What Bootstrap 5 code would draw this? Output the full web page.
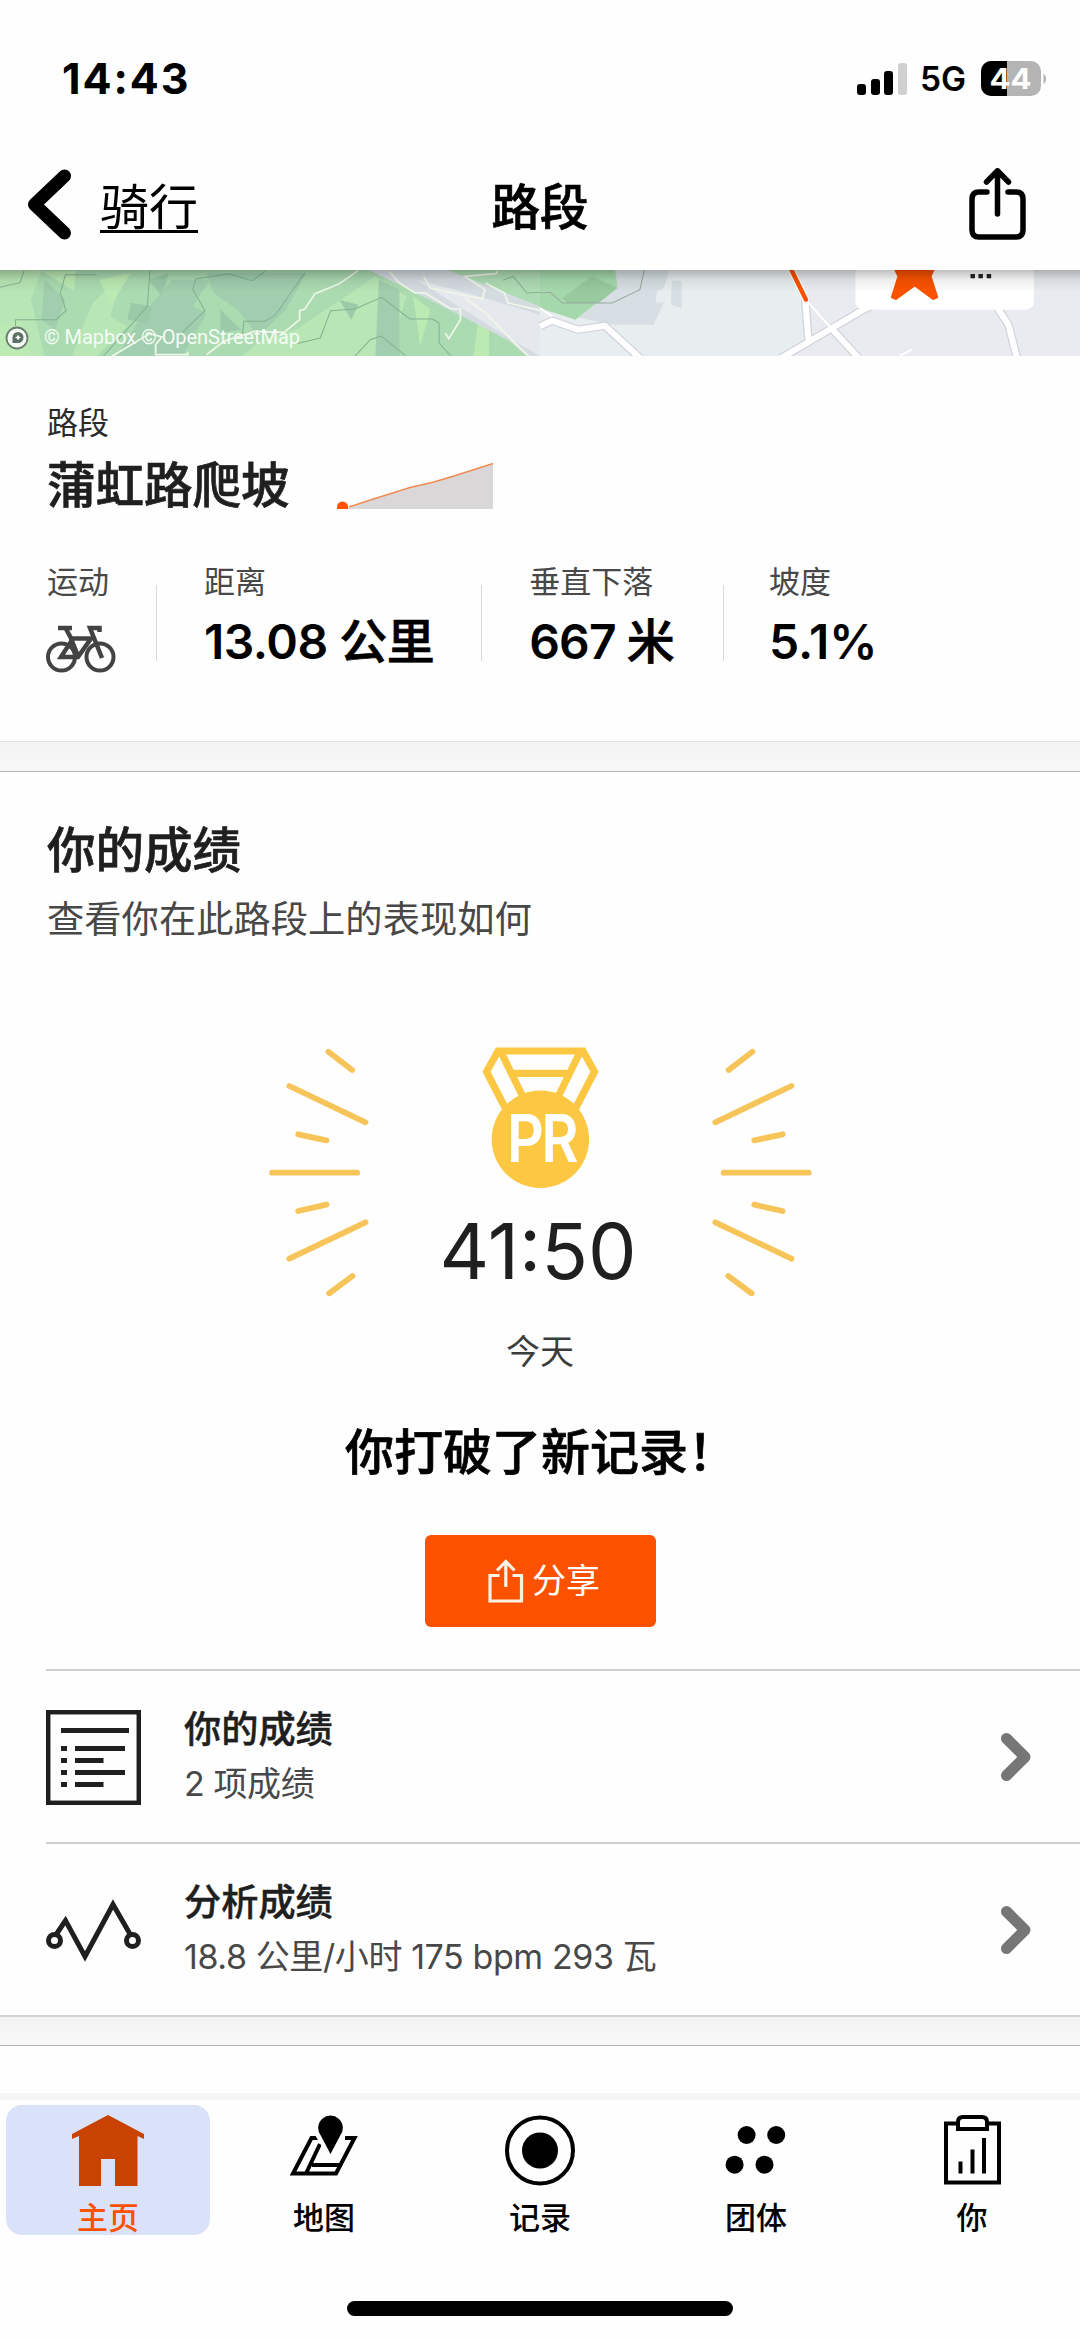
<!DOCTYPE html>
<html lang="zh-CN">
<head>
<meta charset="utf-8">
<meta name="viewport" content="width=device-width, initial-scale=1">
<title>路段</title>
<link rel="stylesheet" href="https://cdn.jsdelivr.net/npm/bootstrap@5.3.0/dist/css/bootstrap.min.css">
<style>
  body { font-family: Inter, "Noto Sans CJK SC", sans-serif; color: #000; background: #fefefe; width: 1080px; height: 2339px; overflow: hidden; }
  svg { display: block; flex: none; }
  .semi { font-weight: 500; -webkit-text-stroke: .7px currentColor; }
  .statusbar { height: 157px; padding: 0 33px 0 62px; }
  .clock { font-size: 43px; font-weight: 700; line-height: 157px; letter-spacing: 1.9px; }
  .signal { width: 50px; height: 32px; margin-right: 13px; }
  .carrier { font-size: 33.5px; font-weight: 600; line-height: 40px; width: 61px; }
  .topnav { height: 113px; padding: 0 27px 12px 27px; }
  .topnav > * { flex: 1 1 0; }
  .topnav svg { margin-bottom: 6px; }
  .share-link svg { margin-right: 27px; }
  .back-text { font-size: 49px; line-height: 60px; margin-left: 27px; text-decoration: underline; text-decoration-thickness: 3px; text-underline-offset: 5px; color: #000; }
  .nav-heading { font-size: 48.5px; line-height: 60px; }
  .seg-info { height: 385px; padding: 30px 46px 0 47px; }
  .seg-label { font-size: 31px; line-height: 36px; color: #2a2a2a; margin-top: 19px; }
  .name-line { margin-top: 15px; gap: 47px; }
  .seg-name { font-size: 48.5px; line-height: 60px; color: #1f1f1f; }
  .stats { margin-top: 47px; }
  .stat { padding-right: 47px; }
  .stat:first-child { width: 109px; padding-right: 0; }
  .stat.drop { padding-right: 49px; }
  .stat.drop .stat-value { letter-spacing: -.9px; }
  .bike { margin-top: 23px; margin-left: -1px; }
  .rule-v + .stat { padding-left: 47px; }
  .rule-v + .stat.grade { padding-left: 45px; }
  .stat.grade .stat-value { letter-spacing: 0; }
  .stat-label { font-size: 31px; line-height: 38px; color: #484848; }
  .stat-value { font-size: 48px; line-height: 60px; font-weight: 600; margin-top: 11px; white-space: nowrap; letter-spacing: -.5px; }
  .rule-v { width: 1px; height: 76px; background: #d8d8d8; margin-top: 22px; }
  .gap-band { height: 31px; background: linear-gradient(#f3f3f3, #f8f8f8); border-top: 1px solid #e2e2e2; border-bottom: 1px solid #b2b2b2; }
  .gap-band.lower { border-top: 2px solid #d2d4d3; }
  .efforts { height: 1243px; }
  .sec-title { font-size: 48.5px; line-height: 60px; color: #1f1f1f; padding-left: 47px; margin-top: 49px; }
  .sec-sub { font-size: 37.3px; line-height: 44px; color: #484848; padding-left: 47px; margin-top: 17px; }
  .hero-art { margin-top: 98px; margin-bottom: -90px; }
  .pr-time { font-size: 77px; line-height: 90px; font-weight: 400; color: #1f1f1f; margin-top: -4px; padding-right: 4px; }
  .today { font-size: 34px; line-height: 40px; color: #3c3c3c; margin-top: 36px; }
  .broke { font-size: 49px; line-height: 60px; margin-top: 51px; padding-left: 2px; }
  .share-btn { width: 231px; height: 92px; border-radius: 6px; background: #fc5200; color: #fff; font-size: 34px; line-height: 40px; border: 0; margin-top: 52px; padding: 0 0 0 8px; gap: 8px; }
  .linkrow { height: 173px; margin-left: 46px; padding: 2px 48px 0 0; border-top: 2px solid #cfcfcf; color: inherit; text-decoration: none; gap: 43px; }
  .row-text { padding-bottom: 4px; }
  .chev { margin-bottom: 2px; }
  .row-title { font-size: 37.2px; line-height: 44px; font-weight: 500; color: #1f1f1f; -webkit-text-stroke: .4px currentColor; }
  .row-sub { font-size: 34px; line-height: 40px; color: #484848; margin-top: 12px; letter-spacing: -.4px; }
  .tabs { border-top: 7px solid #f5f5f5; height: 246px; }
  .tab-list { padding-top: 5px; }
  .tab { width: 216px; height: 130px; padding-top: 10px; color: #000; text-decoration: none; }
  .tab.on { width: 204px; margin: 0 6px; background: #dae2f9; border-radius: 16px; color: #fc5200; }
  .tab-label { font-size: 31px; line-height: 36px; font-weight: 500; margin-top: 14px; }
  .home-bar { width: 386px; height: 15px; border-radius: 8px; background: #000; margin-top: 66px; }
</style>
</head>
<body class="d-flex flex-column">
<header class="flex-shrink-0">
  <div class="statusbar d-flex align-items-center">
    <div class="clock me-auto">14:43</div>
    <svg class="signal" viewBox="0 0 50 32"><g fill="#000"><rect x="0" y="21" width="9" height="11" rx="3"/><rect x="14" y="16" width="9" height="16" rx="3"/><rect x="27" y="8" width="9" height="24" rx="3"/></g><rect x="41" y="0" width="9" height="32" rx="3" fill="#d0d0d0"/></svg>
    <div class="carrier">5G</div>
    <svg width="66" height="36" viewBox="0 0 66 36"><defs><clipPath id="bat"><rect width="60" height="35" rx="10"/></clipPath></defs><g clip-path="url(#bat)"><rect width="60" height="35" fill="#b4b4b4"/><rect width="26" height="35"/></g><path d="M62.500 12.500a7 7 0 0 1 0 11z" fill="#b4b4b4"/><text x="29.500" y="28" text-anchor="middle" font-family="Inter" font-weight="700" font-size="28.500" textLength="42" lengthAdjust="spacingAndGlyphs" fill="#fff">44</text></svg>
  </div>
  <nav class="topnav d-flex align-items-center">
    <a class="d-flex align-items-center text-decoration-none" href="#">
      <svg width="46" height="72" viewBox="0 0 46 72"><path d="M37.500 7 7.500 35.500 37.500 64" fill="none" stroke="#000" stroke-width="13" stroke-linecap="round" stroke-linejoin="round"/></svg>
      <span class="back-text">骑行</span>
    </a>
    <div class="nav-heading semi text-center">路段</div>
    <a class="share-link d-flex justify-content-end" href="#"><svg width="57" height="74" viewBox="0 0 57 74"><g fill="none" stroke="#000" stroke-width="5.500" stroke-linecap="round" stroke-linejoin="round"><path d="M18 24H10q-7 0-7 7V62q0 7 7 7H47q7 0 7-7V31q0-7-7-7H39"/><path d="M28.500 46V3M17.500 14 28.500 2.800 39.500 14"/></g></svg></a>
  </nav>
</header>

<svg class="mapstrip" width="1080" height="86" viewBox="0 0 1080 86">
  <defs><linearGradient id="shade" x1="0" y1="0" x2="0" y2="1"><stop offset="0" stop-color="#000" stop-opacity=".25"/><stop offset=".45" stop-color="#000" stop-opacity=".07"/><stop offset="1" stop-color="#000" stop-opacity="0"/></linearGradient></defs>
  <rect width="1080" height="86" fill="#e9ebf0"/>
  <g transform="scale(.3444 .3333) translate(0 -31)">
    <path d="M0 31H1568V290H0z" fill="#abdbb1"/>
    <path d="M0 31h120l-30 90 40 170H0zM270 130l90-90-40 130 50 30-90 90h-70l30-90zM860 210 1090 50l90 60-50 180H700l60-50z" fill="#b8e6b5"/>
    <path d="M340 290 410 170l90-110h110l-50 80 40 20-70 130zM600 40h290l-60 110-80 80-60-80-70-50zM1100 60l60 30v200h-70zM130 60l60 60-30 90-40-30z" fill="#a1ceae"/>
    <path d="M0 200l60-20 30 110H0zM290 60l90-20-60 100zM1200 110l50 40-30 110zM1390 170l30 20v100h-45zM120 33h100l-5 60z" fill="#bceab3"/>
    <path d="M380 130l60 10-10 50-60-10zM430 60l60-20-20 70zM640 150l60 60-60 10zM985 120l55 15-20 45z" fill="#9bcaa8"/>
    <path d="M1070 31H1300L1568 140V290H1530L1480 245 1380 190 1190 90z" fill="#d5dce1"/>
    <path d="M1210 60 1390 110 1568 165V290L1470 230z" fill="#e5e9ed"/>
    <path d="M1300 31H1568V140L1400 60z" fill="#afdcb5"/>
    <g fill="none" stroke="#83b391" stroke-width="3"><path d="M0 83 58 69 70 33M45 200V180H163L192 153 175 100 190 45H280M435 33 428 140 300 290M530 218 595 153 560 90 568 58 665 42 732 63 770 35M885 40 800 165 770 185H708L704 230M860 252 930 235 960 153 1030 148 1108 113 1190 178H1255L1275 190V250L1310 290M1030 290 1075 240 1107 229 1180 290M1460 62 1490 50 1530 100 1568 98"/></g>
    <g fill="none" stroke="#f0f7e8" stroke-width="5"><path d="M325 290 435 222 470 232 452 255V285H545V278M600 285 650 245 740 215 825 218 870 180V153L885 148 915 102 985 72 1040 33M1130 35 1160 70 1205 100 1235 100 1310 148H1337V180L1303 237 1293 220M1445 35 1440 42 1350 50 1408 90 1400 118 1250 85 1230 50M1350 115 1410 160 1490 245 1535 290M1410 70 1465 100 1475 130 1568 152"/></g>
  </g>
  <g transform="translate(540) scale(.3444 .3333) translate(0 -31)">
    <path d="M0 31H720L780 120V240L700 290H0z" fill="#e8edef"/>
    <path d="M0 100 220 33H375L360 85 340 95 335 128H360L330 195H215L0 150zM383 62 411 65V145L380 135z" fill="#d7dfe4"/>
    <path d="M0 31H218L225 80 103 180 0 145z" fill="#a5d9ac"/><path d="M65 115 150 50 225 85 170 130H80z" fill="#99ca9f"/>
    <path d="M0 100 30 98 65 130 210 130 290 90 303 31" fill="none" stroke="#95a99d" stroke-width="3"/>
    <g fill="none" stroke-linejoin="round"><g stroke="#cfd2da" stroke-width="25"><path d="M0 200 35 183 110 210 188 198 290 295M700 295 780 247 930 155 1000 120M780 247 770 120M850 210 925 295M1325 140 1360 195 1385 295"/></g><g stroke="#fff" stroke-width="18"><path d="M0 200 35 183 110 210 188 198 290 295M700 295 780 247 930 155 1000 120M780 247 770 120M850 210 925 295M1325 140 1360 195 1385 295"/></g><path d="M0 145 35 170M775 125 850 210M1045 288 1080 270" stroke="#fff" stroke-width="6"/></g>
    <path d="M725 20 772 120" stroke="#fff" stroke-width="20" stroke-linecap="round"/><path d="M725 20 772 120" stroke="#fc5200" stroke-width="13" stroke-linecap="round"/>
    <path d="M916 0H1434V125Q1434 150 1408 150H942Q916 150 916 125z" fill="#fff"/>
    <path d="M1028 20H1146L1133 50 1152 112 1142 117 1088 76 1033 117 1023 112 1042 50z" fill="#fc5200" stroke="#fc5200" stroke-width="8" stroke-linejoin="round"/>
    <path d="M1250 43h13v13h-13zM1273 43h13v13h-13zM1297 43h13v13h-13z" fill="#222"/>
  </g>
  <rect width="1080" height="22" fill="url(#shade)"/>
  <circle cx="17" cy="68" r="10.500" fill="#f4faf4" stroke="#697d70" stroke-width="1.800"/><path d="M12.500 73v-5.500a5.500 5.500 0 1 1 5.500 5.500z" fill="#5e7066"/><path d="M18 64.500l1 2 2 1-2 1-1 2-1-2-2-1 2-1z" fill="#fff"/>
  <text x="44" y="74" font-family="Roboto" font-size="20" textLength="256" fill="#f5fbf5">© Mapbox © OpenStreetMap</text>
</svg>

<section class="seg-info flex-shrink-0">
  <div class="seg-label">路段</div>
  <div class="name-line d-flex align-items-center">
    <h1 class="seg-name semi mb-0">蒲虹路爬坡</h1>
    <svg width="158" height="48" viewBox="0 0 158 48"><path d="M12 46 35 38 73 26 95 21 117 14 156 2V47H6z" fill="#d9d7d8"/><path d="M12 45 35 37.500 73 25.500 95 20.500 117 14 156 1.500" fill="none" stroke="#f08a50" stroke-width="1.600"/><path d="M0 47v-2a5.500 5.500 0 0 1 11 0v2z" fill="#fc5200"/></svg>
  </div>
  <div class="stats d-flex">
    <div class="stat"><div class="stat-label">运动</div>
      <svg class="bike" width="70" height="50" viewBox="0 0 70 50"><g fill="none" stroke="#434343" stroke-width="4"><circle cx="15.500" cy="33" r="13.500"/><circle cx="54" cy="33" r="13.500"/><path d="M56 34 44 4H53.500V8" stroke-width="4.500"/><path d="M12 4H26M20 5 26 16 15 33H32L45 14.500H25L32 32" stroke-width="4.500"/></g></svg>
    </div>
    <div class="rule-v"></div>
    <div class="stat"><div class="stat-label">距离</div><div class="stat-value">13.08 <span class="semi">公里</span></div></div>
    <div class="rule-v"></div>
    <div class="stat drop"><div class="stat-label">垂直下落</div><div class="stat-value">667 <span class="semi">米</span></div></div>
    <div class="rule-v"></div>
    <div class="stat grade"><div class="stat-label">坡度</div><div class="stat-value">5.1%</div></div>
  </div>
</section>
<div class="gap-band flex-shrink-0"></div>

<section class="efforts flex-shrink-0 d-flex flex-column">
  <h2 class="sec-title semi mb-0">你的成绩</h2>
  <div class="sec-sub">查看你在此路段上的表现如何</div>
  <div class="d-flex flex-column align-items-center">
    <svg class="hero-art" width="600" height="260" viewBox="0 40 600 260">
      <defs><g id="rays"><path d="M88.400 51.700 112.100 70M49.400 86 125.500 122.300M58.200 134.300 86.500 140.300M32.100 172.700H117.100M58.200 211 86.500 204.700M49.400 258.700 125.500 222.300M89.200 293.300 112.500 276" fill="none" stroke="#f6c458" stroke-width="5.800" stroke-linecap="round"/></g></defs>
      <use href="#rays"/><use href="#rays" transform="translate(600.800) scale(-1 1)"/>
      <g fill="none" stroke="#fcc742" stroke-width="7.200"><path d="M265 107.500 246.500 71.700 258 51H343L354.500 71.700 336 107.500M260.500 51 282 95M340.500 51 319 95M271 73.300H330"/></g>
      <circle cx="300.400" cy="139.300" r="48.700" fill="#fcc742"/>
      <text x="267" y="162" font-family="Inter" font-weight="600" font-size="66" textLength="69" lengthAdjust="spacingAndGlyphs" letter-spacing="-3" fill="#fff">PR</text>
    </svg>
    <div class="pr-time">41:50</div>
    <div class="today">今天</div>
    <div class="broke semi">你打破了新记录！</div>
    <button class="share-btn btn d-flex align-items-center justify-content-center" type="button">
      <svg width="36" height="44" viewBox="0 0 36 44"><g fill="none" stroke="#fff2e4" stroke-width="3.200"><path d="M11.500 16.500H2V42H33.500V16.500H24.500M17.800 28V2.500M9 11.500 17.800 2.500 26.500 11.500"/></g></svg><span>分享</span>
    </button>
  </div>
  <div class="mt-auto">
    <a class="linkrow d-flex align-items-center" href="#">
      <svg width="95" height="95" viewBox="0 0 95 95"><rect x="2.200" y="2.200" width="90.600" height="90.600" fill="none" stroke="#1f1f1f" stroke-width="4.500"/><path d="M15 20.500H83M15 38.500h6M29 38.500H79M15 50.500h6M29 50.500H57.500M15 62.500h6M29 62.500H79M15 74.500h6M29 74.500H57.500" stroke="#1f1f1f" stroke-width="5"/></svg>
      <div class="row-text me-auto"><div class="row-title">你的成绩</div><div class="row-sub">2 项成绩</div></div>
      <svg class="chev" width="32" height="50" viewBox="0 0 32 50"><path d="M6.500 6.500 25 25 6.500 43.500" fill="none" stroke="#767677" stroke-width="11" stroke-linecap="round" stroke-linejoin="round"/></svg>
    </a>
    <a class="linkrow d-flex align-items-center" href="#">
      <svg width="95" height="95" viewBox="0 0 95 95"><g fill="none" stroke="#1f1f1f" stroke-width="5"><circle cx="8.500" cy="57.500" r="6"/><circle cx="86.500" cy="57.500" r="6"/><path d="M10.500 51 19.500 37.500 39 73.500 67 21.500 84 51"/></g></svg>
      <div class="row-text me-auto"><div class="row-title">分析成绩</div><div class="row-sub">18.8 公里/小时 175 bpm 293 瓦</div></div>
      <svg class="chev" width="32" height="50" viewBox="0 0 32 50"><path d="M6.500 6.500 25 25 6.500 43.500" fill="none" stroke="#767677" stroke-width="11" stroke-linecap="round" stroke-linejoin="round"/></svg>
    </a>
  </div>
</section>
<div class="gap-band lower flex-shrink-0"></div>

<footer class="tabs mt-auto flex-shrink-0 d-flex flex-column align-items-center">
  <div class="tab-list d-flex w-100">
    <a class="tab on d-flex flex-column align-items-center" href="#"><svg width="72" height="71" viewBox="0 0 72 71"><path d="M36 0 72 19V24L65.500 21V71H43V44H29V71H7V21L0 24V19z" fill="#c84202"/></svg><span class="tab-label">主页</span></a>
    <a class="tab d-flex flex-column align-items-center" href="#"><svg width="72" height="71" viewBox="0 0 72 71"><path d="M30 23H23.500L5 58.500H48L66.500 23H57M32 29 18 58.500M24 50H51" fill="none" stroke="#000" stroke-width="4"/><path d="M42.500 46 27 20H58z" fill="#fff"/><path d="M42.500 39 32.500 20A12.300 12.300 0 1 1 52.500 20z"/></svg><span class="tab-label">地图</span></a>
    <a class="tab d-flex flex-column align-items-center" href="#"><svg width="72" height="71" viewBox="0 0 72 71"><circle cx="36" cy="35.500" r="33" fill="none" stroke="#000" stroke-width="4"/><circle cx="36" cy="35.500" r="18"/></svg><span class="tab-label">记录</span></a>
    <a class="tab d-flex flex-column align-items-center" href="#"><svg width="72" height="71" viewBox="0 0 72 71"><circle cx="26.600" cy="20" r="9"/><circle cx="56.200" cy="20" r="9"/><circle cx="14.600" cy="49.700" r="9"/><circle cx="44.500" cy="49.700" r="9"/></svg><span class="tab-label">团体</span></a>
    <a class="tab d-flex flex-column align-items-center" href="#"><svg width="72" height="71" viewBox="0 0 72 71"><g fill="none" stroke="#000" stroke-width="4"><path d="M22 8.500H10V67.500H63V8.500H52"/><path d="M22 14V7Q22 2 27 2H46Q51 2 51 7V14z"/><path d="M24.500 46.500V58.500M36.500 34.500V58.500M48 23V58.500"/></g></svg><span class="tab-label">你</span></a>
  </div>
  <div class="home-bar"></div>
</footer>
<script src="https://cdn.jsdelivr.net/npm/bootstrap@5.3.0/dist/js/bootstrap.bundle.min.js"></script>
</body>
</html>
